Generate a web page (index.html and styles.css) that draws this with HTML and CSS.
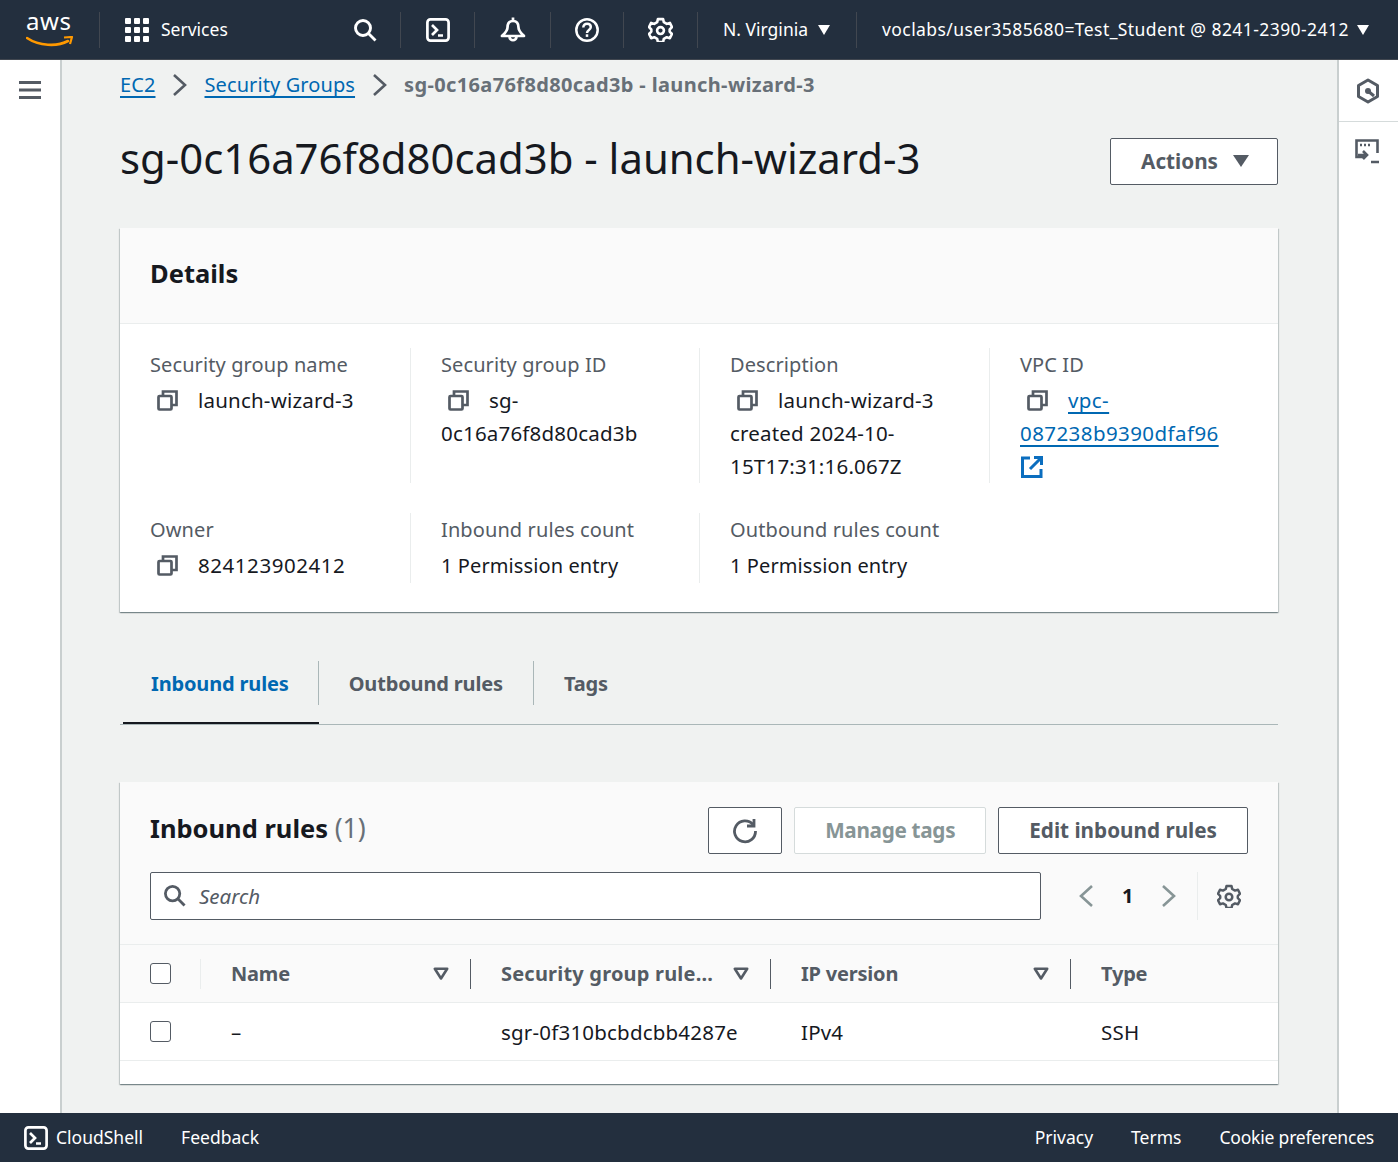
FILE: index.html
```html
<!DOCTYPE html>
<html lang="en">
<head>
    <meta charset="UTF-8">
    <title>sg-0c16a76f8d80cad3b - launch-wizard-3</title>
    <link rel="stylesheet" href="styles.css">
</head>
<body>
    <header class="topbar">
        <div class="logo">
            <span class="logo-text">aws</span>
            <svg class="logo-smile" width="48" height="12" viewBox="0 0 48 12"><path d="M1 2c12 8 30 9 41 3" fill="none" stroke="#ff9900" stroke-width="2.6" stroke-linecap="round"/><path d="M38 1.500l8-.5-2 7" fill="none" stroke="#ff9900" stroke-width="2.200" stroke-linejoin="round"/></svg>
        </div>
        <div class="services">
            <svg width="24" height="24" viewBox="0 0 24 24" fill="#fff"><rect x="0" y="0" width="6" height="6" rx="1"/><rect x="9" y="0" width="6" height="6" rx="1"/><rect x="18" y="0" width="6" height="6" rx="1"/><rect x="0" y="9" width="6" height="6" rx="1"/><rect x="9" y="9" width="6" height="6" rx="1"/><rect x="18" y="9" width="6" height="6" rx="1"/><rect x="0" y="18" width="6" height="6" rx="1"/><rect x="9" y="18" width="6" height="6" rx="1"/><rect x="18" y="18" width="6" height="6" rx="1"/></svg>
            <span>Services</span>
        </div>
        <div class="top-icons">
            <div class="top-icon top-icon-first">
                <svg width="24" height="24" viewBox="0 0 24 24" fill="none" stroke="#fff" stroke-width="2.900"><circle cx="10" cy="10" r="7.500"/><path d="M15.500 15.500l7 7"/></svg>
            </div>
            <div class="top-icon">
                <svg width="24" height="24" viewBox="0 0 24 24" fill="none" stroke="#fff" stroke-width="2.700"><rect x="1.400" y="1.400" width="21.200" height="21.200" rx="3"/><path d="M6 7l5 5-5 5M12 17.500h5"/></svg>
            </div>
            <div class="top-icon top-icon-wide">
                <svg width="26" height="26" viewBox="0 0 26 26" fill="none" stroke="#fff" stroke-width="2.700" stroke-linejoin="round"><path d="M13 .5v3.500M13 4c-4 0-5.500 3-5.500 6.500 0 3.500-2.500 5.500-5.500 8.500h22c-3-3-5.500-5-5.500-8.500C18.500 7 17 4 13 4z"/><path d="M9.500 19.500c0 5 7 5 7 0"/></svg>
            </div>
            <div class="top-icon top-icon-narrow">
                <svg width="24" height="24" viewBox="0 0 24 24" fill="none" stroke="#fff" stroke-width="2.500"><circle cx="12" cy="12" r="10.700"/><path d="M8.300 9.500c0-2.300 1.700-3.800 3.800-3.800s3.700 1.400 3.700 3.400c0 2.800-3.800 3-3.800 5.800"/><path d="M12 16.300v2.600"/></svg>
            </div>
            <div class="top-icon">
                <svg width="25" height="25" viewBox="0 0 24 24" fill="none" stroke="#fff" stroke-width="2.500" stroke-linejoin="round"><path d="M9.500 2h5l.7 3 2.800 1.600 3-.9 2 4-2.200 2.300v2l2.200 2.300-2 4-3-.9-2.800 1.600-.7 3h-5l-.7-3L6 19.400l-3 .9-2-4L3.200 14v-2L1 9.700l2-4 3 .9L8.800 5z"/><circle cx="12" cy="13" r="3.300"/></svg>
            </div>
        </div>
        <div class="region"><span>N. Virginia</span><i class="caret"></i></div>
        <div class="account"><span>voclabs/user3585680=Test_Student @ 8241-2390-2412</span><i class="caret"></i></div>
    </header>

    <div class="shell">
        <aside class="left-rail">
            <svg width="24" height="20" viewBox="0 0 24 20" fill="none" stroke="#545b64" stroke-width="3"><path d="M1 2.500h22M1 10h22M1 17.500h22"/></svg>
        </aside>

        <main class="content">
            <nav class="breadcrumb">
                <a href="#">EC2</a>
                <svg class="crumb-sep" width="16" height="24" viewBox="0 0 16 24" fill="none" stroke="#545b64" stroke-width="2.600"><path d="M2 2l11 10-11 10"/></svg>
                <a href="#">Security Groups</a>
                <svg class="crumb-sep" width="16" height="24" viewBox="0 0 16 24" fill="none" stroke="#545b64" stroke-width="2.600"><path d="M2 2l11 10-11 10"/></svg>
                <span class="crumb-current">sg-0c16a76f8d80cad3b - launch-wizard-3</span>
            </nav>

            <div class="page-head">
                <h1>sg-0c16a76f8d80cad3b - launch-wizard-3</h1>
                <button class="btn btn-actions">Actions <i class="caret caret-dark"></i></button>
            </div>

            <section class="card details">
                <div class="card-head"><h2>Details</h2></div>
                <div class="detail-grid">
                    <div class="detail detail-tall">
                        <div class="label">Security group name</div>
                        <div class="value"><svg class="copy" width="21" height="21" viewBox="0 0 21 21" fill="none" stroke="#545b64" stroke-width="2.700"><rect x="1.500" y="6" width="13" height="13.500" rx="1"/><path d="M6 6V1.500h13.500v13.500H15"/></svg>launch-wizard-3</div>
                    </div>
                    <div class="detail detail-tall">
                        <div class="label">Security group ID</div>
                        <div class="value"><svg class="copy" width="21" height="21" viewBox="0 0 21 21" fill="none" stroke="#545b64" stroke-width="2.700"><rect x="1.500" y="6" width="13" height="13.500" rx="1"/><path d="M6 6V1.500h13.500v13.500H15"/></svg>sg-<br>0c16a76f8d80cad3b</div>
                    </div>
                    <div class="detail detail-tall">
                        <div class="label">Description</div>
                        <div class="value"><svg class="copy" width="21" height="21" viewBox="0 0 21 21" fill="none" stroke="#545b64" stroke-width="2.700"><rect x="1.500" y="6" width="13" height="13.500" rx="1"/><path d="M6 6V1.500h13.500v13.500H15"/></svg>launch-wizard-3<br>created 2024-10-<br>15T17:31:16.067Z</div>
                    </div>
                    <div class="detail detail-tall detail-last">
                        <div class="label">VPC ID</div>
                        <div class="value value-link"><svg class="copy" width="21" height="21" viewBox="0 0 21 21" fill="none" stroke="#545b64" stroke-width="2.700"><rect x="1.500" y="6" width="13" height="13.500" rx="1"/><path d="M6 6V1.500h13.500v13.500H15"/></svg><a href="#">vpc-<br>087238b9390dfaf96</a><br><svg class="external" width="24" height="24" viewBox="0 0 24 24" fill="none" stroke="#0b6ebf" stroke-width="3"><path d="M10 3H2.500v18.500H21V14M14 2.500h7.500V10M21 3L10 14"/></svg></div>
                    </div>
                    <div class="detail">
                        <div class="label">Owner</div>
                        <div class="value value-num"><svg class="copy" width="21" height="21" viewBox="0 0 21 21" fill="none" stroke="#545b64" stroke-width="2.700"><rect x="1.500" y="6" width="13" height="13.500" rx="1"/><path d="M6 6V1.500h13.500v13.500H15"/></svg>824123902412</div>
                    </div>
                    <div class="detail">
                        <div class="label">Inbound rules count</div>
                        <div class="value value-plain">1 Permission entry</div>
                    </div>
                    <div class="detail">
                        <div class="label">Outbound rules count</div>
                        <div class="value value-plain">1 Permission entry</div>
                    </div>
                </div>
            </section>

            <div class="tabs">
                <a class="tab tab-active" href="#"><span>Inbound rules</span></a>
                <a class="tab" href="#"><span>Outbound rules</span></a>
                <a class="tab" href="#"><span>Tags</span></a>
            </div>

            <section class="card rules">
                <div class="rules-head">
                    <h2>Inbound rules <span class="count">(1)</span></h2>
                    <div class="rules-actions">
                        <button class="btn btn-icon"><svg width="26" height="26" viewBox="0 0 26 26" fill="none" stroke="#545b64" stroke-width="2.800"><path d="M21 6.500A10.500 10.500 0 1 0 23.500 13"/><path d="M22 1v7h-7"/></svg></button>
                        <button class="btn btn-disabled">Manage tags</button>
                        <button class="btn">Edit inbound rules</button>
                    </div>
                </div>
                <div class="rules-filter">
                    <div class="search">
                        <svg width="23" height="23" viewBox="0 0 24 24" fill="none" stroke="#545b64" stroke-width="2.900"><circle cx="10" cy="10" r="7.500"/><path d="M15.500 15.500l7 7"/></svg>
                        <span>Search</span>
                    </div>
                    <div class="pager">
                        <svg width="16" height="24" viewBox="0 0 16 24" fill="none" stroke="#879596" stroke-width="2.600"><path d="M14 2L3 12l11 10"/></svg>
                        <span class="page-num">1</span>
                        <svg width="16" height="24" viewBox="0 0 16 24" fill="none" stroke="#879596" stroke-width="2.600"><path d="M2 2l11 10-11 10"/></svg>
                    </div>
                    <div class="table-settings">
                        <svg width="24" height="24" viewBox="0 0 24 24" fill="none" stroke="#545b64" stroke-width="2.500" stroke-linejoin="round"><path d="M9.500 2h5l.7 3 2.800 1.600 3-.9 2 4-2.200 2.300v2l2.200 2.300-2 4-3-.9-2.800 1.600-.7 3h-5l-.7-3L6 19.400l-3 .9-2-4L3.200 14v-2L1 9.700l2-4 3 .9L8.800 5z"/><circle cx="12" cy="13" r="3.300"/></svg>
                    </div>
                </div>
                <div class="table">
                    <div class="row row-head">
                        <div class="cell cell-check"><i class="checkbox"></i></div>
                        <div class="cell cell-name"><span>Name</span><svg class="sort" width="16" height="14" viewBox="0 0 16 14" fill="none" stroke="#545b64" stroke-width="2.600" stroke-linejoin="round"><path d="M1.800 1.800h12.400L8 11.500z"/></svg></div>
                        <div class="cell cell-rule"><span class="head-wide">Security group rule...</span><svg class="sort" width="16" height="14" viewBox="0 0 16 14" fill="none" stroke="#545b64" stroke-width="2.600" stroke-linejoin="round"><path d="M1.800 1.800h12.400L8 11.500z"/></svg></div>
                        <div class="cell cell-ip"><span>IP version</span><svg class="sort" width="16" height="14" viewBox="0 0 16 14" fill="none" stroke="#545b64" stroke-width="2.600" stroke-linejoin="round"><path d="M1.800 1.800h12.400L8 11.500z"/></svg></div>
                        <div class="cell cell-type">Type</div>
                    </div>
                    <div class="row row-body">
                        <div class="cell cell-check"><i class="checkbox"></i></div>
                        <div class="cell cell-name">–</div>
                        <div class="cell cell-rule">sgr-0f310bcbdcbb4287e</div>
                        <div class="cell cell-ip">IPv4</div>
                        <div class="cell cell-type">SSH</div>
                    </div>
                </div>
            </section>
        </main>

        <aside class="right-rail">
            <div class="rail-item">
                <svg width="24" height="26" viewBox="0 0 24 26" fill="none" stroke="#545b64" stroke-width="3" stroke-linejoin="round"><path d="M12 2l9.500 5.500v11L12 24l-9.500-5.500v-11z"/><circle cx="12" cy="13" r="3" fill="#545b64" stroke="none"/><path d="M12 13l6 5"/></svg>
            </div>
            <div class="rail-item">
                <svg width="26" height="26" viewBox="0 0 26 26" fill="none" stroke="#545b64" stroke-width="2.600"><path d="M10 18H1.500V1.500h21V14"/><path d="M5 6h2M9 6h2M13 6h2" stroke-width="2.400"/><path d="M3 16h8M8 12l4 4-4 4M16 23h8"/></svg>
            </div>
        </aside>
    </div>

    <footer class="bottombar">
        <div class="cloudshell">
            <svg width="24" height="24" viewBox="0 0 24 24" fill="none" stroke="#fff" stroke-width="2.700"><rect x="1.400" y="1.400" width="21.200" height="21.200" rx="3"/><path d="M6 7l5 5-5 5M12 17.500h5"/></svg>
            <span>CloudShell</span>
        </div>
        <span class="feedback">Feedback</span>
        <div class="footer-links">
            <span>Privacy</span>
            <span>Terms</span>
            <span class="cookie">Cookie preferences</span>
        </div>
    </footer>
</body>
</html>
```

FILE: styles.css
```css
* {
    box-sizing: border-box;
}
html, body {
    height: 100%;
}
body {
    margin: 0;
    display: flex;
    flex-direction: column;
    overflow: hidden;
    font-family: "Noto Sans", Arial, sans-serif;
    font-size: 20px;
    line-height: 33px;
    color: #16191f;
    background-color: #f0f2f1;
}
a {
    color: #0068b2;
    text-decoration-skip-ink: none;
    text-underline-offset: 4px;
}
button {
    font-family: inherit;
}
svg {
    display: block;
    flex: none;
}

/* top bar */
.topbar {
    height: 60px;
    flex: none;
    display: flex;
    align-items: center;
    background-color: #232f3e;
    color: #fff;
    font-size: 17.5px;
    border-bottom: 1px solid #414750;
}
.logo {
    width: 100px;
    height: 36px;
    padding-left: 26px;
    border-right: 1px solid #414750;
    position: relative;
}
.logo-text {
    display: block;
    font-size: 24px;
    line-height: 24px;
    margin-top: -3px;
    letter-spacing: 0.6px;
}
.logo-smile {
    position: absolute;
    left: 26px;
    top: 24px;
}
.services {
    display: flex;
    align-items: center;
    gap: 12px;
    padding-left: 25px;
    width: 253px;
}
.top-icons {
    display: flex;
    align-items: center;
}
.top-icon {
    height: 36px;
    width: 74px;
    display: flex;
    align-items: center;
    justify-content: center;
    border-right: 1px solid #414750;
}
.top-icon-first {
    width: 48px;
    padding-right: 24px;
    justify-content: flex-start;
    overflow: visible;
}
.top-icon-wide {
    width: 76px;
}
.top-icon-narrow {
    width: 73px;
}
.region {
    width: 159px;
    height: 36px;
    display: flex;
    align-items: center;
    gap: 10px;
    padding-left: 25px;
    border-right: 1px solid #414750;
}
.account {
    display: flex;
    align-items: center;
    gap: 8px;
    padding-left: 25px;
    white-space: nowrap;
    letter-spacing: 0.43px;
}
.caret {
    display: block;
    width: 0;
    height: 0;
    border-left: 6px solid transparent;
    border-right: 6px solid transparent;
    border-top: 10px solid #fff;
}
.caret-dark {
    border-left-width: 8px;
    border-right-width: 8px;
    border-top: 12px solid #545b64;
}

/* rails */
.shell {
    flex: 1;
    min-height: 0;
    display: flex;
}
.left-rail {
    width: 62px;
    flex: none;
    background-color: #fff;
    border-right: 2px solid #c9cfcf;
    padding: 20px 0 0 18px;
}
.right-rail {
    width: 61px;
    flex: none;
    background-color: #fff;
    border-left: 2px solid #c9cfcf;
}
.rail-item {
    height: 62px;
    display: flex;
    justify-content: center;
    padding-top: 18px;
    padding-right: 2px;
}
.rail-item:first-child {
    border-bottom: 1px solid #d5dbdb;
}
.rail-item:last-child {
    padding-top: 17px;
}
.content {
    flex: 1;
    min-width: 0;
    padding: 0 59px 0 58px;
    overflow: hidden;
}

/* breadcrumb and title */
.breadcrumb {
    height: 49px;
    display: flex;
    align-items: center;
    gap: 16.5px;
    letter-spacing: 0.1px;
}
.crumb-current {
    font-weight: 700;
    color: #687078;
    letter-spacing: 0.37px;
}
.page-head {
    height: 119px;
    display: flex;
    justify-content: space-between;
    align-items: flex-start;
    padding-top: 29px;
}
h1 {
    margin: -1px 0 0;
    font-size: 41.85px;
    line-height: 42px;
    font-weight: 400;
}
h2 {
    margin: 0;
    font-size: 25.5px;
    line-height: 34px;
    font-weight: 700;
}

/* buttons */
.btn {
    height: 47px;
    padding: 0 30px 2px;
    background-color: #fff;
    border: 1px solid #545b64;
    border-radius: 2px;
    color: #545b64;
    font-size: 20.7px;
    font-weight: 700;
    white-space: nowrap;
}
.btn-actions {
    display: flex;
    align-items: center;
    gap: 15px;
    padding-right: 28px;
}
.btn-icon {
    width: 74px;
    padding: 0;
    display: flex;
    align-items: center;
    justify-content: center;
}
.btn-disabled {
    border-color: #d5dbdb;
    color: #879596;
    letter-spacing: -0.3px;
}

/* cards */
.card {
    background-color: #fff;
    box-shadow: 0 1px 1px 0 rgba(0, 28, 36, 0.3), 1px 1px 1px 0 rgba(0, 28, 36, 0.15), -1px 1px 1px 0 rgba(0, 28, 36, 0.15);
}
.card-head {
    height: 96px;
    padding: 28px 30px 0;
    background-color: #fafafa;
    border-bottom: 1px solid #eaeded;
}
.detail-grid {
    display: grid;
    grid-template-columns: 291px 289px 290px 288px;
    row-gap: 30px;
    padding: 24px 0 29px 0;
}
.detail {
    padding: 0 20px 0 30px;
    border-right: 1px solid #eaeded;
    height: 70px;
}
.detail-tall {
    height: 135px;
}
.detail-last {
    border-right: 0;
}
.detail:nth-child(7) {
    border-right: 0;
}
.label {
    color: #545b64;
    line-height: 34px;
    letter-spacing: 0.1px;
}
.value {
    line-height: 33px;
    margin-top: 2px;
    font-size: 20.5px;
    letter-spacing: 0.2px;
}
.value-link {
    letter-spacing: 0.42px;
}
.value-num {
    letter-spacing: 0.55px;
}
.value-plain {
    font-size: 20px;
    letter-spacing: 0.1px;
}
.copy {
    display: inline-block;
    vertical-align: -3px;
    margin: 0 20px 0 7px;
}
.external {
    display: inline-block;
    vertical-align: -5px;
    margin-left: 0;
}

/* tabs */
.tabs {
    height: 113px;
    padding: 49px 0 0 3px;
    margin-bottom: 57px;
    display: flex;
    border-bottom: 1px solid #aab7b8;
}
.tab {
    height: 63px;
    color: #545b64;
    font-weight: 700;
    text-decoration: none;
    display: flex;
    letter-spacing: -0.15px;
}
.tab span {
    height: 44px;
    line-height: 46px;
    padding: 0 30px;
    border-right: 1px solid #aab7b8;
}
.tab:first-child span {
    padding: 0 29px 0 28px;
}
.tab:last-child span {
    border-right: 0;
}
.tab-active {
    color: #0068b2;
    border-bottom: 2px solid #16191f;
}

/* rules table */
.rules {
    height: 302px;
    background-color: #fff;
}
.rules-head {
    height: 90px;
    padding: 25px 30px 0;
    display: flex;
    justify-content: space-between;
    align-items: flex-start;
    background-color: #fafafa;
}
.rules-head h2 {
    padding-top: 4px;
}
.count {
    font-weight: 400;
    font-size: 26.5px;
    color: #687078;
}
.rules-actions {
    display: flex;
    gap: 12px;
}
.rules-filter {
    height: 73px;
    padding: 0 30px 25px;
    display: flex;
    align-items: center;
    background-color: #fafafa;
    border-bottom: 1px solid #eaeded;
}
.search {
    width: 891px;
    height: 48px;
    display: flex;
    align-items: center;
    gap: 13px;
    padding-left: 12px;
    background-color: #fff;
    border: 1px solid #545b64;
    border-radius: 2px;
    color: #545b64;
    font-size: 20.5px;
    font-style: italic;
}
.search span {
    margin-top: 2px;
}
.pager {
    display: flex;
    align-items: center;
    gap: 28px;
    margin-left: 37px;
    width: 119px;
}
.page-num {
    font-weight: 700;
    width: 11px;
}
.table-settings {
    height: 48px;
    padding-left: 19px;
    border-left: 1px solid #eaeded;
    display: flex;
    align-items: center;
}
.row {
    display: flex;
    align-items: center;
}
.row-head {
    height: 58px;
    background-color: #fafafa;
    border-bottom: 1px solid #eaeded;
    color: #545b64;
    font-weight: 700;
}
.row-body {
    height: 58px;
    padding-top: 1px;
    border-bottom: 1px solid #eaeded;
    font-size: 20.5px;
    letter-spacing: 0.2px;
}
.cell {
    display: flex;
    align-items: center;
    justify-content: space-between;
    height: 100%;
    padding: 0 21px 0 30px;
    white-space: nowrap;
}
.row-head .cell {
    height: 30px;
    border-right: 1px solid #545b64;
    letter-spacing: -0.2px;
}
.row-head .head-wide {
    letter-spacing: 0.2px;
}
.row-head .cell-type {
    border-right: 0;
}
.row-head .cell-check {
    border-right: 1px solid #eaeded;
}
.cell-check {
    width: 81px;
}
.row-body .cell-check {
    margin-top: -1px;
}
.cell-name {
    width: 270px;
}
.cell-rule, .cell-ip {
    width: 300px;
}
.cell-type {
    flex: 1;
}
.checkbox {
    display: block;
    width: 21px;
    height: 21px;
    background-color: #fff;
    border: 1px solid #545b64;
    border-radius: 3px;
}

/* bottom bar */
.bottombar {
    height: 49px;
    flex: none;
    display: flex;
    align-items: center;
    background-color: #232f3e;
    color: #fff;
    font-size: 17.5px;
    padding: 0 24px;
}
.cloudshell {
    display: flex;
    align-items: center;
    gap: 8px;
}
.feedback {
    margin-left: 38px;
}
.footer-links {
    margin-left: auto;
    display: flex;
    gap: 38px;
}
.cookie {
    letter-spacing: -0.2px;
}
```
